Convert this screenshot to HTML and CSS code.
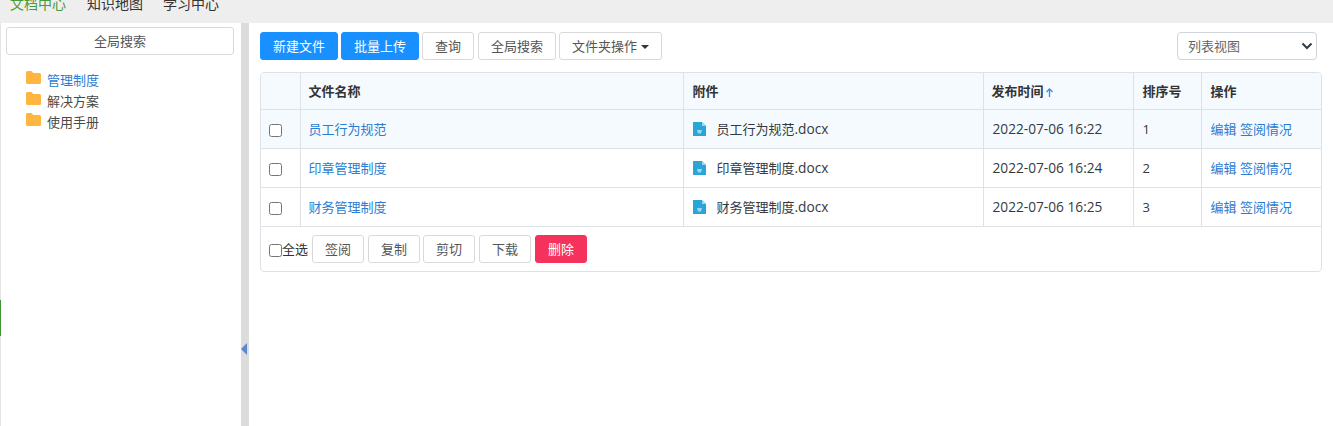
FILE: index.html
```html
<!DOCTYPE html>
<html lang="zh">
<head>
<meta charset="utf-8">
<title>文档中心</title>
<link rel="stylesheet" href="styles.css">
</head>
<body>
<svg class="defs" width="0" height="0">
  <symbol id="folder" viewBox="0 0 15 13"><path d="M1.5 0H5.6L7.2 2H13.5A1.5 1.5 0 0 1 15 3.500V11.500A1.500 1.500 0 0 1 13.500 13H1.500A1.500 1.500 0 0 1 0 11.500V1.500A1.500 1.500 0 0 1 1.500 0Z" fill="#ffb640"/></symbol>
  <symbol id="doc" viewBox="0 0 13 14"><path d="M0 0H9L13 4V14H0Z" fill="#2aa5d8"/><path d="M9 0L13 4H9Z" fill="#9fd6ee"/><path d="M4 8H9L8 11.500H5Z" fill="#9fd6ee"/></symbol>
</svg>
<nav class="topbar">
  <a class="nav-item active">文档中心</a>
  <a class="nav-item">知识地图</a>
  <a class="nav-item">学习中心</a>
</nav>
<div class="layout">
  <aside class="sidebar">
    <div class="edge-mark"></div>
    <button class="btn search-all">全局搜索</button>
    <ul class="tree">
      <li class="selected"><svg class="folder"><use href="#folder"/></svg>管理制度</li>
      <li><svg class="folder"><use href="#folder"/></svg>解决方案</li>
      <li><svg class="folder"><use href="#folder"/></svg>使用手册</li>
    </ul>
  </aside>
  <div class="splitter"><span class="arrow"></span></div>
  <main class="main">
    <div class="toolbar">
      <button class="btn primary">新建文件</button>
      <button class="btn primary">批量上传</button>
      <button class="btn">查询</button>
      <button class="btn search-btn">全局搜索</button>
      <button class="btn">文件夹操作<span class="caret"></span></button>
      <div class="view-select"><span>列表视图</span><svg width="12" height="8" viewBox="0 0 12 8"><path d="M1.500 1.500L6 6L10.500 1.500" fill="none" stroke="#343a40" stroke-width="2"/></svg></div>
    </div>
    <div class="card">
      <table class="grid">
        <colgroup><col class="c1"><col class="c2"><col class="c3"><col class="c4"><col class="c5"><col></colgroup>
        <thead>
          <tr><th></th><th>文件名称</th><th class="pad">附件</th><th>发布时间<svg class="sort" width="9" height="9" viewBox="0 0 9 9"><path d="M4.500 9V1M1.500 4L4.500 1L7.500 4" fill="none" stroke="#3c8dd8" stroke-width="1.300"/></svg></th><th class="pad">排序号</th><th class="pad">操作</th></tr>
        </thead>
        <tbody>
          <tr class="hover"><td class="check"><input type="checkbox"></td><td><a>员工行为规范</a></td><td class="pad"><svg class="doc"><use href="#doc"/></svg>员工行为规范<span class="wide">.docx</span></td><td class="wide pad">2022-07-06 16:22</td><td class="pad">1</td><td class="pad"><a>编辑</a> <a>签阅情况</a></td></tr>
          <tr><td class="check"><input type="checkbox"></td><td><a>印章管理制度</a></td><td class="pad"><svg class="doc"><use href="#doc"/></svg>印章管理制度<span class="wide">.docx</span></td><td class="wide pad">2022-07-06 16:24</td><td class="pad">2</td><td class="pad"><a>编辑</a> <a>签阅情况</a></td></tr>
          <tr><td class="check"><input type="checkbox"></td><td><a>财务管理制度</a></td><td class="pad"><svg class="doc"><use href="#doc"/></svg>财务管理制度<span class="wide">.docx</span></td><td class="wide pad">2022-07-06 16:25</td><td class="pad">3</td><td class="pad"><a>编辑</a> <a>签阅情况</a></td></tr>
        </tbody>
      </table>
      <div class="bulk">
        <label class="all"><input type="checkbox">全选</label>
        <button class="btn">签阅</button>
        <button class="btn">复制</button>
        <button class="btn tight">剪切</button>
        <button class="btn">下载</button>
        <button class="btn danger">删除</button>
      </div>
    </div>
  </main>
</div>
</body>
</html>
```
FILE: styles.css
```css
* { box-sizing: border-box; }
html, body { margin: 0; height: 100%; overflow: hidden; }
body { font: 13px/20px "Open Sans", "Noto Sans CJK SC", sans-serif; color: #343a40; background: #fff; }
.defs { position: absolute; }
.topbar { height: 23px; background: #eeeeee; display: flex; gap: 20px; padding-left: 10px; align-items: flex-end; overflow: hidden; }
.nav-item { font-size: 14px; line-height: 20px; width: 56px; flex: none; color: #333; position: relative; top: -9px; }
.nav-item.active { color: #4b9a3c; margin-right: 1px; }
.layout { display: flex; height: 403px; }
.sidebar { width: 241px; flex: none; padding: 4px 7px 0 6px; border-left: 1px solid #e4e4e4; position: relative; }
.edge-mark { position: absolute; left: -1px; top: 277px; width: 1px; height: 36px; background: #3f9436; }
.btn { font: inherit; height: 28px; padding: 0 12px; background: #fff; color: #555; border: 1px solid #d9d9d9; border-radius: 3px; line-height: 26px; white-space: nowrap; }
.search-all { width: 228px; display: block; padding: 0; margin-left: -1px; }
.tree { list-style: none; margin: 15px 0 0; padding: 0 0 0 19px; }
.tree li { height: 21px; line-height: 21px; display: flex; align-items: center; color: #4a4a4a; }
.tree li.selected { color: #2b7cd3; }
.folder { width: 15px; height: 13px; margin: -6px 6px 0 0; flex: none; }
.splitter { width: 8px; flex: none; background: #dcdcdc; position: relative; }
.arrow { position: absolute; left: 0; top: 320px; border-style: solid; border-width: 6px 6px 6px 0; border-color: transparent #5b86d6 transparent transparent; }
.main { flex: 1; min-width: 0; padding: 9px 11px 0 11px; }
.toolbar { display: flex; align-items: center; gap: 3px; height: 28px; width: 1057px; }
.search-btn { margin-left: 1px; }
.primary { background: #1890ff; border-color: #1890ff; color: #fff; }
.danger { background: #f5325c; border-color: #f5325c; color: #fff; }
.caret { display: inline-block; margin-left: 4px; vertical-align: 2px; border-style: solid; border-width: 4px 4px 0; border-color: #333 transparent transparent; }
.view-select { margin-left: auto; width: 140px; height: 28px; border: 1px solid #ced4da; border-radius: 4px; display: flex; align-items: center; justify-content: space-between; padding: 0 3px 0 10px; color: #666; }
.card { margin-top: 12px; border: 1px solid #dee2e6; border-radius: 4px; width: 1062px; overflow: hidden; }
.grid { width: 1060px; border-collapse: collapse; table-layout: fixed; }
.c1 { width: 39px; } .c2 { width: 383px; } .c3 { width: 300px; } .c4 { width: 150px; } .c5 { width: 68px; }
.grid th, .grid td { border: 1px solid #dee2e6; padding: 0 8px; text-align: left; white-space: nowrap; }
.grid .pad { padding-left: 9px; }
.grid tr > :first-child { border-left: 0; }
.grid tr > :last-child { border-right: 0; }
.grid thead tr:first-child th { border-top: 0; }
.grid th { height: 36px; background: #f5faff; font-weight: 700; color: #333; }
.grid td { height: 39px; }
.grid .hover td { background: #f5faff; }
.grid a { color: #2b7cd3; }
.wide { font-size: 13.7px; }
.grid .check { padding-top: 4px; }
.check input { display: block; margin: 0; width: 13px; height: 13px; }
.doc { width: 13px; height: 14px; margin-right: 11px; vertical-align: -2px; }
.sort { margin-left: 1px; vertical-align: -1px; }
.bulk { display: flex; align-items: center; gap: 4px; height: 44px; padding-left: 8px; }
.tight { margin-left: -1px; }
.all { display: flex; align-items: center; color: #333; }
.all input { margin: 4px 0 0; width: 13px; height: 13px; }
```
